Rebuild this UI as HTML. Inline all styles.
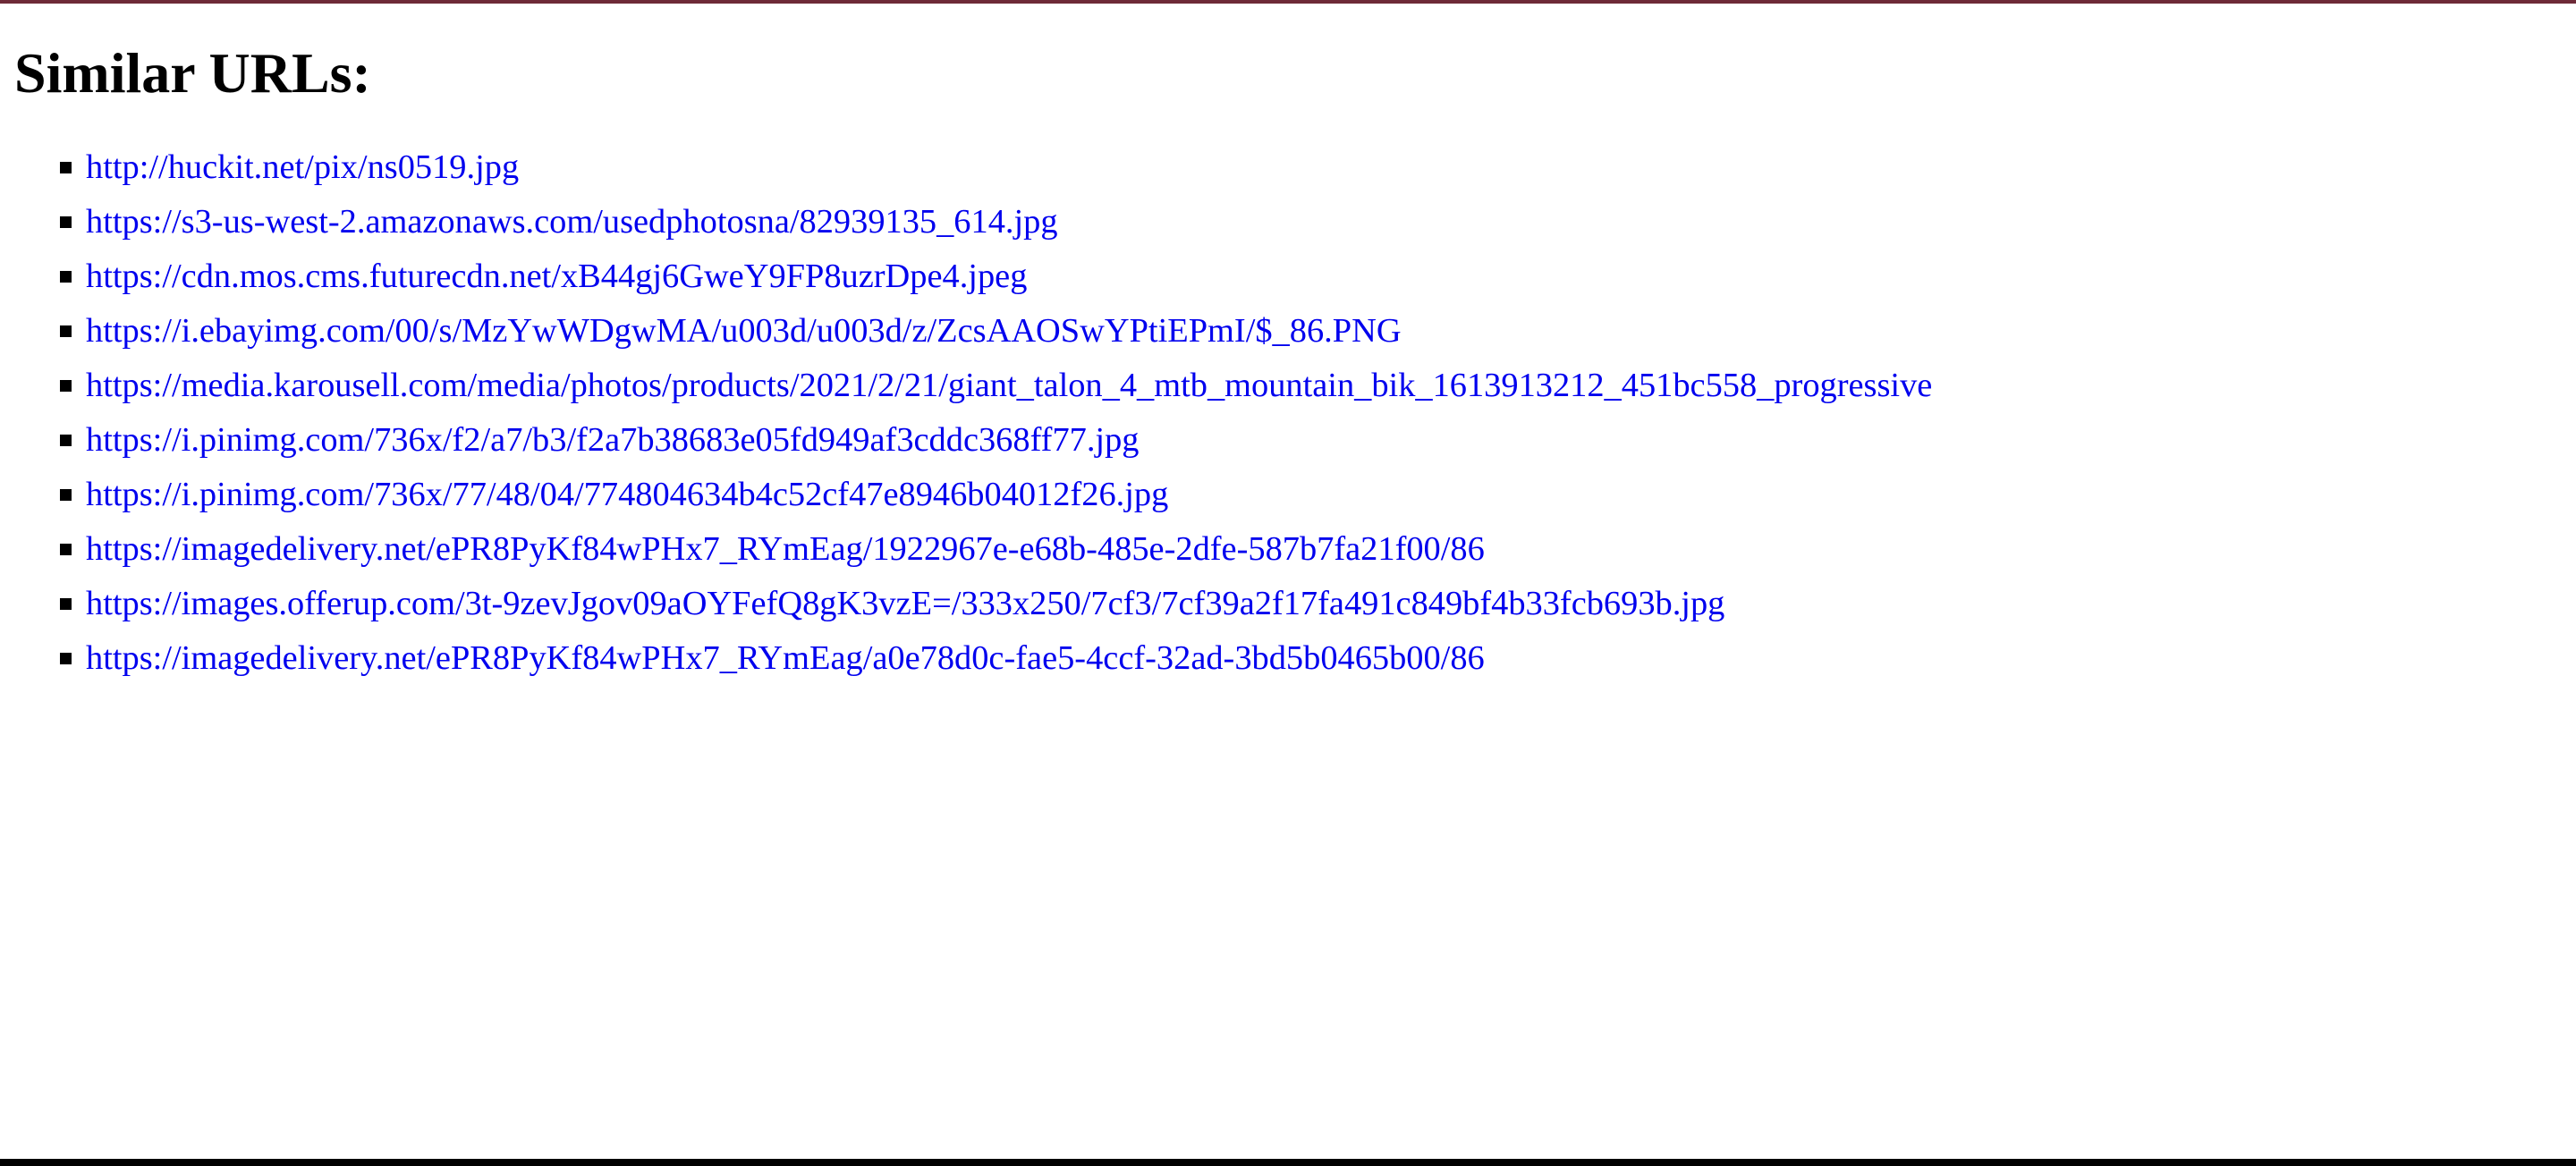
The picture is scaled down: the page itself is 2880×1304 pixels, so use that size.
<!DOCTYPE html>
<html><head><meta charset="utf-8"><style>
html,body{margin:0;padding:0;background:#fff;width:2880px;height:1304px;overflow:hidden;position:relative;font-family:"Liberation Serif",serif}
.top{position:absolute;left:0;top:0;width:2880px;height:4px;background:#6e2a38}
.bot{position:absolute;left:0;top:1296px;width:2880px;height:8px;background:#000}
h2{position:absolute;left:16px;top:50px;margin:0;font-size:64px;line-height:64px;font-weight:bold;color:#000}
ul{position:absolute;left:0;top:157px;margin:0;padding:0;list-style:none}
li{position:relative;height:61px;line-height:61px;font-size:38.4px;padding-left:96px;white-space:nowrap}
li::before{content:"";position:absolute;left:67px;top:24px;width:13px;height:13px;background:#000}
a{color:#0000ee;text-decoration:none}
</style></head><body>
<div class="top"></div>
<h2>Similar URLs:</h2>
<ul>
<li><a>http://huckit.net/pix/ns0519.jpg</a></li>
<li><a>https://s3-us-west-2.amazonaws.com/usedphotosna/82939135_614.jpg</a></li>
<li><a>https://cdn.mos.cms.futurecdn.net/xB44gj6GweY9FP8uzrDpe4.jpeg</a></li>
<li><a>https://i.ebayimg.com/00/s/MzYwWDgwMA/u003d/u003d/z/ZcsAAOSwYPtiEPmI/$_86.PNG</a></li>
<li><a>https://media.karousell.com/media/photos/products/2021/2/21/giant_talon_4_mtb_mountain_bik_1613913212_451bc558_progressive</a></li>
<li><a>https://i.pinimg.com/736x/f2/a7/b3/f2a7b38683e05fd949af3cddc368ff77.jpg</a></li>
<li><a>https://i.pinimg.com/736x/77/48/04/774804634b4c52cf47e8946b04012f26.jpg</a></li>
<li><a>https://imagedelivery.net/ePR8PyKf84wPHx7_RYmEag/1922967e-e68b-485e-2dfe-587b7fa21f00/86</a></li>
<li><a>https://images.offerup.com/3t-9zevJgov09aOYFefQ8gK3vzE=/333x250/7cf3/7cf39a2f17fa491c849bf4b33fcb693b.jpg</a></li>
<li><a>https://imagedelivery.net/ePR8PyKf84wPHx7_RYmEag/a0e78d0c-fae5-4ccf-32ad-3bd5b0465b00/86</a></li>
</ul>
<div class="bot"></div>
</body></html>
